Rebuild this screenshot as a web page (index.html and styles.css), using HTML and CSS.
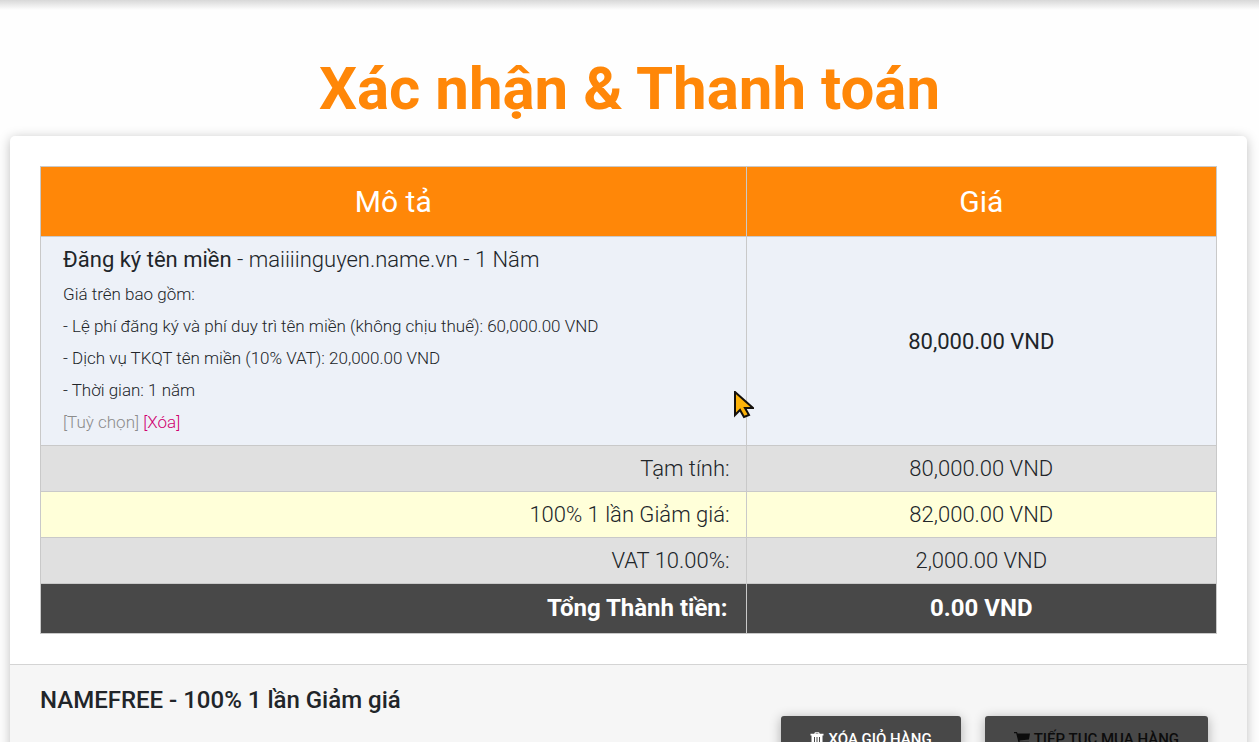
FILE: index.html
```html
<!DOCTYPE html>
<html lang="vi">
<head>
    <meta charset="UTF-8">
    <meta name="viewport" content="width=device-width, initial-scale=1.0">
    <link rel="stylesheet" href="styles.css">
    <title>Xác nhận &amp; Thanh toán</title>
</head>
<body>
    <header class="navbar"></header>
    <h1>Xác nhận &amp; Thanh toán</h1>
    <main class="card">
        <div class="card-body">
            <table class="cart">
                <thead>
                    <tr>
                        <th class="desc">Mô tả</th>
                        <th>Giá</th>
                    </tr>
                </thead>
                <tbody>
                    <tr class="item">
                        <td>
                            <div class="item-name"><strong>Đăng ký tên miền</strong> - maiiiinguyen.name.vn - 1 Năm</div>
                            <div class="item-info">
                                Giá trên bao gồm:<br>
                                - Lệ phí đăng ký và phí duy trì tên miền (không chịu thuế): 60,000.00 VND<br>
                                - Dịch vụ TKQT tên miền (10% VAT): 20,000.00 VND<br>
                                - Thời gian: 1 năm<br>
                                <a href="#" class="edit">[Tuỳ chọn]</a>
                                <a href="#" class="remove">[Xóa]</a>
                            </div>
                        </td>
                        <td class="price">80,000.00 VND</td>
                    </tr>
                    <tr class="subtotal">
                        <td>Tạm tính:</td>
                        <td>80,000.00 VND</td>
                    </tr>
                    <tr class="promo">
                        <td>100% 1 lần Giảm giá:</td>
                        <td>82,000.00 VND</td>
                    </tr>
                    <tr class="subtotal">
                        <td>VAT 10.00%:</td>
                        <td>2,000.00 VND</td>
                    </tr>
                    <tr class="total">
                        <td>Tổng Thành tiền:</td>
                        <td>0.00 VND</td>
                    </tr>
                </tbody>
            </table>
        </div>
        <div class="card-footer">
            <p class="promo-code">NAMEFREE - 100% 1 lần Giảm giá</p>
            <div class="buttons">
                <button type="button" class="btn">
                    <svg class="icon" viewBox="0 0 14 14"><path fill="currentColor" fill-rule="evenodd" d="M4.200 1.800 5 .2h4l.8 1.600H13.500v1.700h-1V13q0 1-1 1h-9q-1 0-1-1V3.500h-1V1.800zM5.500 1.800h3L8.200 1.200H5.800zM4 5v7h1V5zM6.500 5v7h1V5zM9 5v7h1V5z"/></svg>
                    XÓA GIỎ HÀNG
                </button>
                <button type="button" class="btn btn-dark">
                    <svg class="icon icon-cart" viewBox="0 0 16 14"><path fill="currentColor" d="M0 0h3l.5 1.500H16l-1 6-9.500 1 .3 1.200H15V11H4.600L2.200 1.300H0z"/><circle fill="currentColor" cx="6" cy="12.500" r="1.500"/><circle fill="currentColor" cx="13.500" cy="12.500" r="1.500"/></svg>
                    TIẾP TỤC MUA HÀNG
                </button>
            </div>
        </div>
    </main>
    <!-- mouse pointer -->
    <svg class="pointer" viewBox="0 0 20 28"><path d="M1 1v23l5-5 4 7 5-2-4-7h8z" fill="#fdb30a" stroke="#14100c" stroke-width="2"/></svg>
</body>
</html>
```

FILE: styles.css
```css
* {
    box-sizing: border-box;
}

body {
    margin: 0;
    background-color: #fefefe;
    color: #212529;
    font-family: Roboto, "Liberation Sans", sans-serif;
    font-weight: 300;
    overflow: hidden;
}

.navbar {
    height: 10px;
    background: linear-gradient(#d8d8d8, #fefefe);
}

h1 {
    margin: 42px 0 10px;
    color: #ff8708;
    font-size: 60px;
    font-weight: 700;
    line-height: 74px;
    text-align: center;
}

.card {
    margin: 0 12px 0 10px;
    background-color: #fff;
    border-radius: 5px;
    box-shadow: 0 2px 12px rgba(0, 0, 0, 0.25);
}

.card-body {
    padding: 30px;
}

.cart {
    width: 100%;
    border-collapse: collapse;
    font-size: 22px;
    line-height: 33px;
}

.cart th,
.cart td {
    padding: 6px 16px;
    border: 1px solid #c9c9c9;
    text-align: center;
}

.cart th {
    padding: 16px;
    background-color: #ff8708;
    color: #fff;
    font-size: 30px;
    font-weight: 400;
    line-height: 37px;
}

.cart .desc {
    width: 60%;
}

.cart td:first-child {
    text-align: right;
}

.cart .item td {
    background-color: #edf1f8;
}

.cart .item td:first-child {
    padding: 6px 22px;
    text-align: left;
}

.cart strong {
    font-weight: 400;
}

.item-info {
    padding: 2px 0 1px;
    font-size: 17px;
    line-height: 32px;
}

.item-info a {
    color: #8c8c8c;
    text-decoration: none;
}

.item-info .remove {
    color: #d0006f;
}

.cart .price {
    font-weight: 400;
}

.subtotal {
    background-color: #e0e0e0;
}

.promo {
    background-color: #ffffd9;
}

.total {
    background-color: #484848;
    color: #fff;
    font-size: 24px;
    font-weight: 700;
    line-height: 37px;
}

.cart .total td:first-child {
    padding-right: 18px;
}

.card-footer {
    padding: 20px 39px 24px 30px;
    background-color: #f6f6f6;
    border-top: 1px solid #d4d4d4;
}

.promo-code {
    margin: 0;
    font-size: 24px;
    font-weight: 500;
    line-height: 31px;
}

.buttons {
    display: flex;
    justify-content: flex-end;
    gap: 24px;
}

.btn {
    display: flex;
    align-items: center;
    gap: 4px;
    height: 46px;
    padding: 0 29px;
    border: 0;
    border-radius: 3px;
    background-color: #484848;
    box-shadow: 0 2px 12px rgba(0, 0, 0, 0.3);
    color: #fff;
    font-family: inherit;
    font-size: 15px;
    font-weight: 500;
}

.btn-dark {
    color: #0c0c0c;
}

.icon {
    width: 14px;
    height: 14px;
}

.icon-cart {
    width: 16px;
}

.pointer {
    position: absolute;
    top: 391px;
    left: 734px;
    width: 20px;
    height: 28px;
}
```
